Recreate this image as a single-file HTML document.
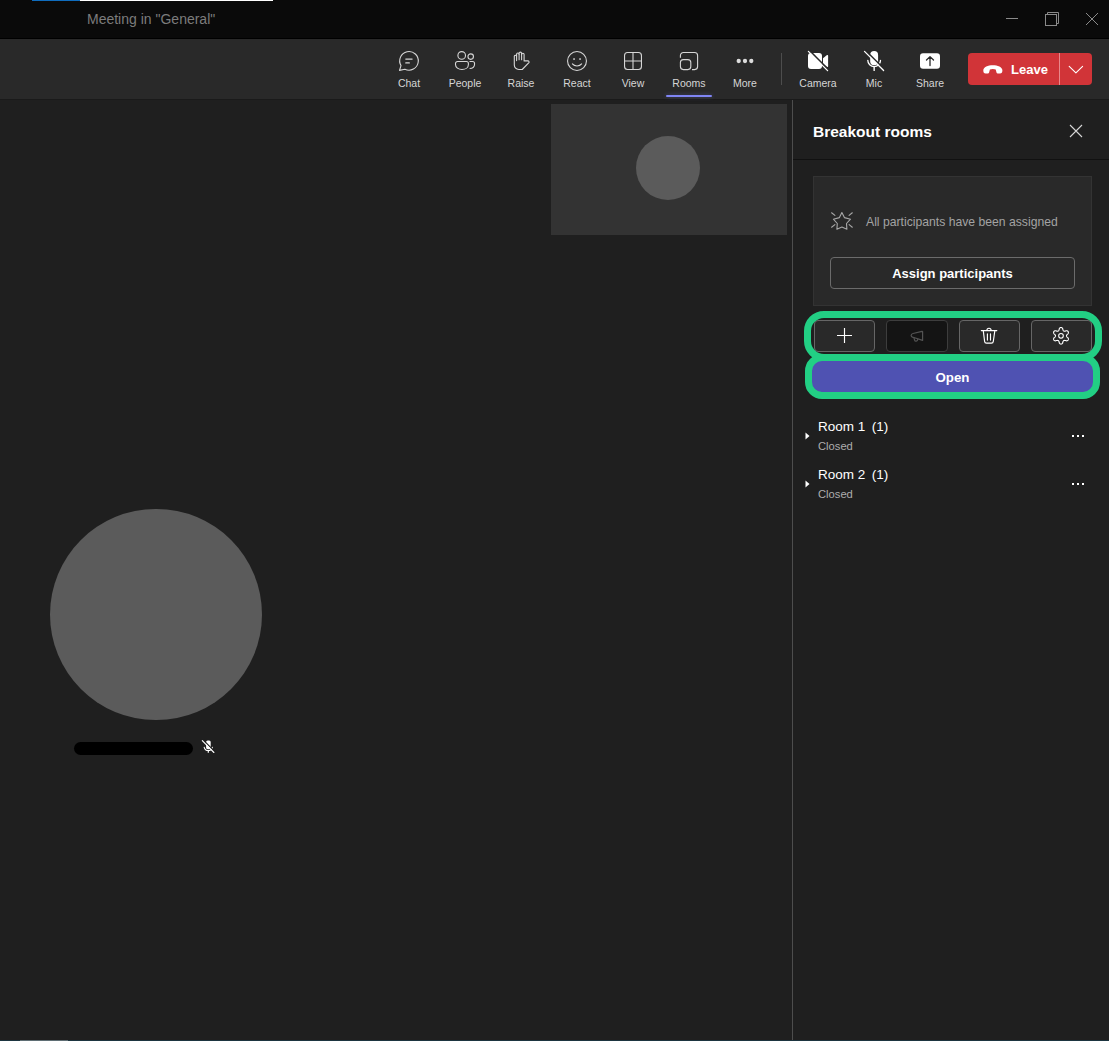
<!DOCTYPE html>
<html><head><meta charset="utf-8">
<style>
*{margin:0;padding:0;box-sizing:border-box}
html,body{width:1109px;height:1041px;overflow:hidden;background:#1f1f1f;font-family:"Liberation Sans",sans-serif}
.a{position:absolute}
.t{position:absolute;line-height:1;white-space:nowrap}
#titlebar{left:0;top:0;width:1109px;height:38px;background:#0a0a0a}
#tbline{left:0;top:38px;width:1109px;height:1px;background:#000}
#toolbar{left:0;top:39px;width:1109px;height:60px;background:#292929}
.lbl{position:absolute;top:78.1px;font-size:10.5px;line-height:1;color:#d6d6d6;width:56px;text-align:center;white-space:nowrap}
.ico{position:absolute;top:51px;width:20px;height:20px}
svg{display:block;overflow:visible}
</style></head><body>
<!-- title bar -->
<div id="titlebar" class="a"></div>
<div id="tbline" class="a"></div>
<div class="a" style="left:32px;top:0;width:48px;height:1px;background:#0f6cbd"></div>
<div class="a" style="left:80px;top:0;width:193px;height:1px;background:#ffffff"></div>
<div class="t" style="left:87px;top:12.15px;font-size:14px;color:#7c7c7c">Meeting in "General"</div>
<!-- window controls -->
<div class="a" style="left:1006px;top:18px;width:12px;height:1px;background:#8a8a8a"></div>
<svg class="a" style="left:1045px;top:12px" width="14" height="14" viewBox="0 0 14 14"><rect x="0.5" y="2.5" width="11" height="11" fill="none" stroke="#8a8a8a" stroke-width="1"/><path d="M2.5 2.5V0.5H13.5V11.5H11.5" fill="none" stroke="#8a8a8a" stroke-width="1"/></svg>
<svg class="a" style="left:1086px;top:13px" width="12" height="12" viewBox="0 0 12 12"><path d="M0 0L12 12M12 0L0 12" stroke="#8a8a8a" stroke-width="1"/></svg>

<!-- toolbar -->
<div id="toolbar" class="a"></div>
<div class="a" style="left:0;top:99px;width:1109px;height:1px;background:#1a1a1a"></div>
<div class="lbl" style="left:381px">Chat</div>
<div class="lbl" style="left:437px">People</div>
<div class="lbl" style="left:493px">Raise</div>
<div class="lbl" style="left:549px">React</div>
<div class="lbl" style="left:605px">View</div>
<div class="lbl" style="left:661px">Rooms</div>
<div class="lbl" style="left:717px">More</div>
<div class="a" style="left:666px;top:95px;width:46px;height:2px;background:#7f85f5;border-radius:1px;box-shadow:0 0 4px rgba(127,133,245,.35)"></div>
<div class="a" style="left:781px;top:53px;width:1px;height:32px;background:#4d4d4d"></div>
<div class="lbl" style="left:790px">Camera</div>
<div class="lbl" style="left:846px">Mic</div>
<div class="lbl" style="left:902px">Share</div>

<!-- leave -->
<div class="a" style="left:968px;top:53px;width:124px;height:32px;background:#d13438;border-radius:4px"></div>
<div class="a" style="left:1059px;top:53px;width:1px;height:32px;background:#e8888b"></div>
<div class="t" style="left:1011px;top:62.8px;font-size:13px;font-weight:bold;color:#fff">Leave</div>

<!-- stage -->
<div class="a" style="left:551px;top:104px;width:236px;height:131px;background:#333333"></div>
<div class="a" style="left:636px;top:136px;width:64px;height:64px;border-radius:50%;background:#5b5b5b"></div>
<div class="a" style="left:50px;top:508.5px;width:211.5px;height:211.5px;border-radius:50%;background:#5b5b5b"></div>
<div class="a" style="left:74px;top:742px;width:119px;height:13px;border-radius:6.5px;background:#000"></div>

<!-- panel -->
<div class="a" style="left:792px;top:100px;width:1px;height:941px;background:#4d4d4d"></div>
<div class="t" style="left:813px;top:123.7px;font-size:15.5px;font-weight:bold;color:#fff">Breakout rooms</div>
<svg class="a" style="left:1070px;top:125px" width="12" height="12" viewBox="0 0 12 12"><path d="M0 0L12 12M12 0L0 12" stroke="#d6d6d6" stroke-width="1.1"/></svg>
<div class="a" style="left:793px;top:159px;width:316px;height:1px;background:#111"></div>

<div class="a" style="left:813px;top:176px;width:279px;height:130px;background:#292929;border:1px solid #333"></div>
<div class="t" style="left:866px;top:215.5px;font-size:12.2px;color:#a3a3a3">All participants have been assigned</div>
<div class="a" style="left:830px;top:257px;width:245px;height:32px;border:1px solid #6b6b6b;border-radius:4px"></div>
<div class="t" style="left:830px;width:245px;text-align:center;top:266.6px;font-size:13px;font-weight:bold;color:#fff">Assign participants</div>

<!-- action buttons -->
<div class="a" style="left:814px;top:320px;width:61px;height:32px;border:1px solid #666;border-radius:4px;background:#292929"></div>
<div class="a" style="left:886px;top:320px;width:62px;height:32px;border:1px solid #3d3d3d;border-radius:4px;background:#141414"></div>
<div class="a" style="left:959px;top:320px;width:61px;height:32px;border:1px solid #666;border-radius:4px;background:#292929"></div>
<div class="a" style="left:1031px;top:320px;width:61px;height:32px;border:1px solid #666;border-radius:4px;background:#292929"></div>
<svg class="a" style="left:837px;top:328px" width="15" height="15" viewBox="0 0 15 15"><path d="M7.5 0V15M0 7.5H15" stroke="#fff" stroke-width="1.15"/></svg>

<!-- green highlights -->
<div class="a" style="left:804px;top:311px;width:298px;height:50px;border:7px solid #22cf84;border-radius:20px"></div>
<div class="a" style="left:805px;top:354px;width:295px;height:45px;border:7px solid #22cf84;border-radius:17px;background:#4f52b2"></div>
<div class="t" style="left:805px;width:295px;text-align:center;top:370.6px;font-size:13.3px;font-weight:bold;color:#fff">Open</div>

<!-- rooms -->
<div class="t" style="left:818px;top:419.6px;font-size:13.5px;color:#fff">Room 1<span style="margin-left:6.5px">(1)</span></div>
<div class="t" style="left:818px;top:440.6px;font-size:11.2px;color:#adadad">Closed</div>
<div class="t" style="left:818px;top:467.5px;font-size:13.5px;color:#fff">Room 2<span style="margin-left:6.5px">(1)</span></div>
<div class="t" style="left:818px;top:488.5px;font-size:11.2px;color:#adadad">Closed</div>
<svg class="a" style="left:805px;top:432px" width="5" height="8" viewBox="0 0 5 8"><path d="M0.5 0.5L4.5 4L0.5 7.5Z" fill="#fff"/></svg>
<svg class="a" style="left:805px;top:480px" width="5" height="8" viewBox="0 0 5 8"><path d="M0.5 0.5L4.5 4L0.5 7.5Z" fill="#fff"/></svg>
<svg class="a" style="left:1071px;top:434px" width="14" height="4" viewBox="0 0 14 4"><rect x="1" y="1" width="2" height="2" fill="#fff"/><rect x="6" y="1" width="2" height="2" fill="#fff"/><rect x="11" y="1" width="2" height="2" fill="#fff"/></svg>
<svg class="a" style="left:1071px;top:482px" width="14" height="4" viewBox="0 0 14 4"><rect x="1" y="1" width="2" height="2" fill="#fff"/><rect x="6" y="1" width="2" height="2" fill="#fff"/><rect x="11" y="1" width="2" height="2" fill="#fff"/></svg>

<!-- toolbar icons -->
<svg class="a" style="left:399px;top:51px" width="20" height="20" viewBox="0 0 20 20" fill="none" stroke="#d6d6d6" stroke-width="1.1"><path d="M2 14.6A9.3 9.3 0 1 1 5.9 18.2L0.5 19.4Z" stroke-linejoin="round"/><path d="M6.85 8.1H13.05M6.85 11.9H10.25" stroke-width="1.4" stroke-linecap="round"/></svg>
<svg class="a" style="left:455px;top:51px" width="20" height="20" viewBox="0 0 20 20" fill="none" stroke="#d6d6d6" stroke-width="1.1"><circle cx="6.7" cy="4.4" r="3.8"/><circle cx="15.7" cy="5.6" r="2.75"/><path d="M2.5 10.45H11.4A2 2 0 0 1 13.4 12.45V13.4C13.4 16.5 10.5 18.45 6.95 18.45C3.4 18.45 0.5 16.5 0.5 13.4V12.45A2 2 0 0 1 2.5 10.45Z"/><path d="M14.5 10.45H17.55A2 2 0 0 1 19.55 12.45V13.3C19.55 15.9 17.4 17.45 14.6 17.45"/></svg>
<svg class="a" style="left:511px;top:51px" width="20" height="20" viewBox="0 0 20 20" fill="none" stroke="#d6d6d6" stroke-width="1.1" stroke-linejoin="round"><path d="M3.3 14V5.1A1.2 1.2 0 0 1 5.6 5.1V3.3A1.2 1.2 0 0 1 8.1 3.3V2.4A1.2 1.2 0 0 1 10.6 2.4V3.5A1.2 1.2 0 0 1 13.1 3.5V9.9L16.9 9.9A1.1 1.1 0 0 1 17.9 11.6L11.2 18.5H7.8C5.2 18.5 3.3 16.5 3.3 14Z"/><path d="M5.6 5V9.6M8.1 3.3V8.8M10.6 2.4V8.8" stroke-linecap="round"/></svg>
<svg class="a" style="left:567px;top:51px" width="20" height="20" viewBox="0 0 20 20" fill="none" stroke="#d6d6d6" stroke-width="1.1"><circle cx="10" cy="10" r="9.45"/><rect x="6.3" y="7.3" width="1.5" height="1.5" fill="#e8e8e8" stroke="none"/><rect x="12.3" y="7.3" width="1.5" height="1.5" fill="#e8e8e8" stroke="none"/><path d="M5.4 12.9C7.6 15.6 12.4 15.6 14.6 12.9" stroke-linecap="round"/></svg>
<svg class="a" style="left:623px;top:51px" width="20" height="20" viewBox="0 0 20 20" fill="none" stroke="#d6d6d6" stroke-width="1.1"><rect x="1.55" y="1.55" width="16.9" height="16.9" rx="3"/><path d="M10 1.55V18.45M1.55 10H18.45"/></svg>
<svg class="a" style="left:679px;top:51px" width="20" height="20" viewBox="0 0 20 20" fill="none" stroke="#d6d6d6" stroke-width="1.1"><path d="M1.4 6.8V4.5A3 3 0 0 1 4.4 1.5H15.6A3 3 0 0 1 18.6 4.5V15.6A3 3 0 0 1 15.6 18.6H13"/><rect x="1.4" y="8.6" width="10.4" height="10" rx="3"/></svg>
<svg class="a" style="left:735px;top:57px" width="20" height="8" viewBox="0 0 20 8" fill="#dcdcdc"><circle cx="3.7" cy="4" r="2.15"/><circle cx="10" cy="4" r="2.15"/><circle cx="16.3" cy="4" r="2.15"/></svg>
<!-- camera off -->
<svg class="a" style="left:807px;top:51px" width="22" height="21" viewBox="0 0 22 21"><rect x="1" y="2" width="14" height="16" rx="3" fill="#fff"/><path d="M16 7.2L20 4A0.8 0.8 0 0 1 21.1 4.7V15.3A0.8 0.8 0 0 1 20 16L16 13Z" fill="#fff"/><path d="M2.3 -0.6L22 19.1" stroke="#292929" stroke-width="1.6"/><path d="M1.4 0.4L20.6 19.6" stroke="#fff" stroke-width="1.3" stroke-linecap="round"/></svg>
<!-- mic off -->
<svg class="a" style="left:864px;top:51px" width="21" height="21" viewBox="0 0 21 21"><rect x="6.2" y="0" width="7.9" height="14.2" rx="3.95" fill="#fff"/><path d="M3.8 9.3A6.35 6.35 0 0 0 16.5 9.3" fill="none" stroke="#fff" stroke-width="1.3" stroke-linecap="round"/><path d="M10.15 15.8V19.4" stroke="#fff" stroke-width="1.4" stroke-linecap="round"/><path d="M1.3 -0.8L21 18.9" stroke="#292929" stroke-width="1.6"/><path d="M0.5 0.4L19.6 19.5" stroke="#fff" stroke-width="1.3" stroke-linecap="round"/></svg>
<!-- share -->
<svg class="a" style="left:919px;top:51px" width="22" height="20" viewBox="0 0 22 20"><rect x="1" y="2.2" width="20" height="15.5" rx="3" fill="#fff"/><path d="M11 14.6V6M7.5 9L11 5.6L14.5 9" fill="none" stroke="#292929" stroke-width="1.3" stroke-linecap="round" stroke-linejoin="round"/></svg>
<!-- leave phone + chevron -->
<svg class="a" style="left:983px;top:64.5px" width="20" height="9" viewBox="0 0 20 9"><path d="M0.3 5.3C0.3 2 5 0.2 9.8 0.2C14.6 0.2 19.4 2 19.4 5.3C19.4 7.4 18.6 8.5 17 8.5H14.8C14.1 8.5 13.7 8.2 13.5 7.5L12.7 4.6C11.3 3.7 8.3 3.7 6.9 4.6L6.1 7.5C5.9 8.2 5.5 8.5 4.8 8.5H2.6C1 8.5 0.3 7.4 0.3 5.3Z" fill="#fff"/></svg>
<svg class="a" style="left:1068px;top:65px" width="16" height="9" viewBox="0 0 16 9"><path d="M1.2 1.3L7.9 7.8L14.6 1.3" fill="none" stroke="#fff" stroke-width="1.1" stroke-linecap="round" stroke-linejoin="round"/></svg>
<!-- star -->
<svg class="a" style="left:830px;top:211px" width="24" height="20" viewBox="830 211 24 20" fill="none" stroke="#a8a8a8" stroke-width="1.1" stroke-linejoin="round" stroke-linecap="round"><path d="M841.9 212.6L839.4 217.6L833.4 219.2L837.3 223.5L836.9 229.2L841.9 227.1L846.9 229.2L846.5 223.5L850.5 219.2L844.4 217.6Z"/><path d="M831.6 212.8L834.9 215.4M852.3 212.8L849.1 215.4M831.6 227.2L834.9 224.6M852.3 227.2L849.1 224.6"/></svg>
<!-- megaphone -->
<svg class="a" style="left:908px;top:328px" width="18" height="16" viewBox="908 328 18 16" fill="none" stroke="#535353" stroke-width="1.2" stroke-linejoin="round" stroke-linecap="round"><path d="M922.6 331.6A0.4 0.4 0 0 1 922.6 331.6V340.4L913 337.3C911.7 337 911.1 336.4 911.1 335.4C911.1 334.4 911.7 333.8 913 333.5L922 331.3Z"/><path d="M913.9 337.7L914.6 340.2C915 341.3 916.6 341.5 917.4 340.4L917.8 339"/></svg>
<!-- trash -->
<svg class="a" style="left:979px;top:325px" width="20" height="20" viewBox="979 325 20 20" fill="none" stroke="#fff" stroke-width="1.15" stroke-linecap="round" stroke-linejoin="round"><path d="M981.3 330.6H996.8"/><path d="M986.9 330.3A2.05 2.05 0 0 1 991.1 330.3"/><path d="M983.3 330.9L984.6 341.4A1.9 1.9 0 0 0 986.5 343.1H991.4A1.9 1.9 0 0 0 993.3 341.4L994.8 330.9"/><path d="M987.4 333.9V340.1M990.5 333.9V340.1"/></svg>
<!-- gear -->
<svg class="a" style="left:1051px;top:326px" width="20" height="20" viewBox="-10 -9.8 20 20" fill="none" stroke="#fff" stroke-width="1.1" stroke-linejoin="round"><path d="M5.50 0.00 L5.52 0.19 L5.57 0.39 L5.66 0.60 L5.79 0.81 L5.95 1.05 L6.15 1.31 L6.42 1.60 L6.91 1.98 L7.15 2.32 L7.29 2.65 L7.38 2.98 L7.41 3.30 L7.38 3.60 L7.31 3.89 L7.19 4.15 L7.02 4.39 L6.81 4.59 L6.56 4.77 L6.27 4.90 L5.95 4.99 L5.58 5.03 L5.17 4.99 L4.59 4.76 L4.21 4.67 L3.88 4.63 L3.60 4.60 L3.35 4.61 L3.12 4.63 L2.93 4.68 L2.75 4.76 L2.59 4.88 L2.45 5.02 L2.32 5.20 L2.19 5.42 L2.07 5.67 L1.94 5.98 L1.82 6.36 L1.74 6.97 L1.56 7.35 L1.35 7.64 L1.11 7.88 L0.85 8.06 L0.57 8.19 L0.29 8.27 L0.00 8.30 L-0.29 8.27 L-0.57 8.19 L-0.85 8.06 L-1.11 7.88 L-1.35 7.64 L-1.56 7.35 L-1.74 6.97 L-1.82 6.36 L-1.94 5.98 L-2.07 5.67 L-2.19 5.42 L-2.32 5.20 L-2.45 5.02 L-2.59 4.88 L-2.75 4.76 L-2.93 4.68 L-3.12 4.63 L-3.35 4.61 L-3.60 4.60 L-3.88 4.63 L-4.21 4.67 L-4.59 4.76 L-5.17 4.99 L-5.58 5.03 L-5.95 4.99 L-6.27 4.90 L-6.56 4.77 L-6.81 4.59 L-7.02 4.39 L-7.19 4.15 L-7.31 3.89 L-7.38 3.60 L-7.41 3.30 L-7.38 2.98 L-7.29 2.65 L-7.15 2.32 L-6.91 1.98 L-6.42 1.60 L-6.15 1.31 L-5.95 1.05 L-5.79 0.81 L-5.66 0.60 L-5.57 0.39 L-5.52 0.19 L-5.50 0.00 L-5.52 -0.19 L-5.57 -0.39 L-5.66 -0.60 L-5.79 -0.81 L-5.95 -1.05 L-6.15 -1.31 L-6.42 -1.60 L-6.91 -1.98 L-7.15 -2.32 L-7.29 -2.65 L-7.38 -2.98 L-7.41 -3.30 L-7.38 -3.60 L-7.31 -3.89 L-7.19 -4.15 L-7.02 -4.39 L-6.81 -4.59 L-6.56 -4.77 L-6.27 -4.90 L-5.95 -4.99 L-5.58 -5.03 L-5.17 -4.99 L-4.59 -4.76 L-4.21 -4.67 L-3.88 -4.63 L-3.60 -4.60 L-3.35 -4.61 L-3.12 -4.63 L-2.93 -4.68 L-2.75 -4.76 L-2.59 -4.88 L-2.45 -5.02 L-2.32 -5.20 L-2.19 -5.42 L-2.07 -5.67 L-1.94 -5.98 L-1.82 -6.36 L-1.74 -6.97 L-1.56 -7.35 L-1.35 -7.64 L-1.11 -7.88 L-0.85 -8.06 L-0.57 -8.19 L-0.29 -8.27 L-0.00 -8.30 L0.29 -8.27 L0.57 -8.19 L0.85 -8.06 L1.11 -7.88 L1.35 -7.64 L1.56 -7.35 L1.74 -6.97 L1.82 -6.36 L1.94 -5.98 L2.07 -5.67 L2.19 -5.42 L2.32 -5.20 L2.45 -5.02 L2.59 -4.88 L2.75 -4.76 L2.93 -4.68 L3.12 -4.63 L3.35 -4.61 L3.60 -4.60 L3.88 -4.63 L4.21 -4.67 L4.59 -4.76 L5.17 -4.99 L5.58 -5.03 L5.95 -4.99 L6.27 -4.90 L6.56 -4.77 L6.81 -4.59 L7.02 -4.39 L7.19 -4.15 L7.31 -3.89 L7.38 -3.60 L7.41 -3.30 L7.38 -2.98 L7.29 -2.65 L7.15 -2.32 L6.91 -1.98 L6.42 -1.60 L6.15 -1.31 L5.95 -1.05 L5.79 -0.81 L5.66 -0.60 L5.57 -0.39 L5.52 -0.19Z"/><circle cx="0" cy="0" r="2.3"/></svg>
<!-- name mic off -->
<svg class="a" style="left:201px;top:739px" width="14" height="15" viewBox="201 739 14 15"><rect x="206.1" y="740.5" width="4.6" height="8.7" rx="1.6" fill="#fff"/><path d="M204.2 747.3A4.15 4.15 0 0 0 212.3 747.3" fill="none" stroke="#fff" stroke-width="1.1" stroke-linecap="round"/><path d="M208.3 750.6V752.7" stroke="#fff" stroke-width="1.2"/><path d="M202.9 739.6L215.2 752.1" stroke="#1f1f1f" stroke-width="1.3"/><path d="M202.3 740.7L213.9 752.5" stroke="#fff" stroke-width="1.1" stroke-linecap="round"/></svg>

<!-- bottom line -->
<div class="a" style="left:0;top:1040px;width:1109px;height:1px;background:#1d3540"></div>
<div class="a" style="left:20px;top:1040px;width:48px;height:1px;background:#5f6e74"></div>
</body></html>
